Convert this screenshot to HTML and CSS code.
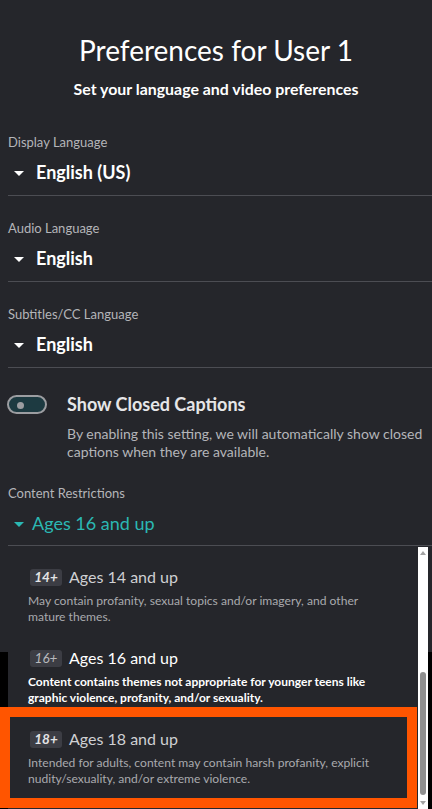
FILE: index.html
```html
<!DOCTYPE html>
<html lang="en">
<head>
<meta charset="utf-8">
<title>Preferences</title>
<link rel="stylesheet" href="styles.css">
</head>
<body>
<div class="panel">
  <header class="header">
    <h1 class="title">Preferences for User 1</h1>
    <p class="subtitle">Set your language and video preferences</p>
  </header>

  <div class="field">
    <div class="label">Display Language</div>
    <div class="value"><span class="caret"></span>English (US)</div>
  </div>
  <div class="field">
    <div class="label">Audio Language</div>
    <div class="value"><span class="caret"></span>English</div>
  </div>
  <div class="field">
    <div class="label">Subtitles/CC Language</div>
    <div class="value"><span class="caret"></span>English</div>
  </div>

  <div class="toggle-row">
    <div class="toggle"><span class="knob"></span></div>
    <div class="toggle-text">
      <div class="toggle-title">Show Closed Captions</div>
      <div class="toggle-desc">By enabling this setting, we will automatically show closed captions when they are available.</div>
    </div>
  </div>

  <div class="field restrict">
    <div class="label">Content Restrictions</div>
    <div class="value teal"><span class="caret teal-caret"></span>Ages 16 and up</div>
  </div>
</div>

<div class="listbox">
  <div class="list-inner">
    <div class="item">
      <div class="item-head"><span class="badge">14+</span><span class="item-title">Ages 14 and up</span></div>
      <div class="item-desc">May contain profanity, sexual topics and/or imagery, and other mature themes.</div>
    </div>
    <div class="item hover">
      <div class="item-head"><span class="badge">16+</span><span class="item-title">Ages 16 and up</span></div>
      <div class="item-desc">Content contains themes not appropriate for younger teens like graphic violence, profanity, and/or sexuality.</div>
    </div>
    <div class="item focused">
      <div class="item-head"><span class="badge">18+</span><span class="item-title">Ages 18 and up</span></div>
      <div class="item-desc">Intended for adults, content may contain harsh profanity, explicit nudity/sexuality, and/or extreme violence.</div>
    </div>
  </div>
  <div class="scrollbar">
    <span class="arrow up"></span>
    <span class="thumb"></span>
    <span class="arrow down"></span>
  </div>
</div>
</body>
</html>
```

FILE: styles.css
```css
* { box-sizing: border-box; }
html, body { margin: 0; padding: 0; }
body {
  background: #000;
  font-family: Lato, "Open Sans", sans-serif;
  color: #fff;
  width: 432px;
  height: 809px;
  overflow: hidden;
  position: relative;
}
.panel {
  background: #25262b;
  height: 652px;
}
.header {
  padding: 32px 0 11px;
  text-align: center;
}
.title {
  margin: 0;
  font-size: 28px;
  line-height: 36px;
  font-weight: 400;
  color: #fff;
}
.subtitle {
  margin: 11px 0 0;
  font-size: 15.9px;
  line-height: 20px;
  font-weight: 700;
  color: #fff;
}
.field {
  margin-left: 8px;
  padding-top: 24px;
  padding-bottom: 11px;
  border-bottom: 1px solid #4c4d53;
}
.label {
  font-size: 13px;
  line-height: 16px;
  color: #b4b5b9;
}
.value {
  margin-top: 10px;
  display: flex;
  align-items: center;
  font-size: 18px;
  line-height: 24px;
  font-weight: 700;
  color: #fff;
}
.caret {
  width: 0;
  height: 0;
  border-left: 5px solid transparent;
  border-right: 5px solid transparent;
  border-top: 5px solid #fff;
  margin: 3px 12px 0 6px;
}
.teal { color: #2bb8b3; font-weight: 400; }
.teal-caret { margin-right: 8px; border-top-color: #2bb8b3; }
.toggle-row {
  display: flex;
  align-items: flex-start;
  padding: 24px 4px 0 7px;
}
.toggle {
  flex: none;
  width: 40px;
  height: 19px;
  margin-top: 3px;
  border: 2px solid #9c9da1;
  border-radius: 10px;
  background: #1d3a41;
  position: relative;
}
.knob {
  position: absolute;
  left: 8px;
  top: 4.5px;
  width: 7px;
  height: 7px;
  border-radius: 50%;
  background: #9c9da1;
}
.toggle-text { margin-left: 20px; }
.toggle-title {
  font-size: 18px;
  line-height: 24px;
  font-weight: 700;
  color: #e6e6e8;
}
.toggle-desc {
  margin-top: 9px;
  font-size: 14px;
  line-height: 17.5px;
  color: #b4b5b9;
}
.restrict { padding-top: 25px; padding-bottom: 10px; }

.listbox {
  position: absolute;
  left: 8px;
  top: 547px;
  width: 420px;
  height: 262px;
  background: #25262b;
}
.list-inner {
  padding-top: 8px;
  width: 410px;
}
.item {
  height: 81px;
  padding: 11px 33px 0 20px;
  position: relative;
}
.item-head {
  display: flex;
  align-items: center;
  height: 22px;
}
.badge {
  margin-left: 2px;
  width: 32px;
  height: 17px;
  border-radius: 3px;
  background: #3c3d44;
  color: #e4e4e6;
  font-style: italic;
  font-weight: 700;
  font-size: 13.5px;
  line-height: 17px;
  text-align: center;
}
.item-title {
  margin-left: 7px;
  font-size: 16px;
  line-height: 22px;
  color: #cfd0d3;
}
.item-desc {
  margin-top: 5px;
  font-size: 12.1px;
  line-height: 16px;
  color: #a9aaae;
}
.hover .badge { color: #b8b9bc; font-weight: 400; }
.hover .item-title { color: #fff; }
.hover .item-desc { color: #fff; font-weight: 700; font-size: 12px; }
.focused::after {
  content: "";
  position: absolute;
  left: -8px;
  right: 1px;
  top: -10px;
  bottom: -10px;
  border: 10px solid #ff5500;
  pointer-events: none;
}
.scrollbar {
  position: absolute;
  right: 0;
  top: 0;
  width: 10px;
  height: 262px;
  background: #fff;
}
.arrow {
  position: absolute;
  left: 2px;
  width: 0;
  height: 0;
  border-left: 3px solid transparent;
  border-right: 3px solid transparent;
}
.arrow.up { top: 4px; border-bottom: 4px solid #a3a3a3; }
.arrow.down { top: 254px; border-top: 4px solid #a3a3a3; }
.thumb {
  position: absolute;
  left: 2px;
  top: 125px;
  width: 6px;
  height: 123px;
  border-radius: 3px;
  background: #8f8f8f;
}
```
